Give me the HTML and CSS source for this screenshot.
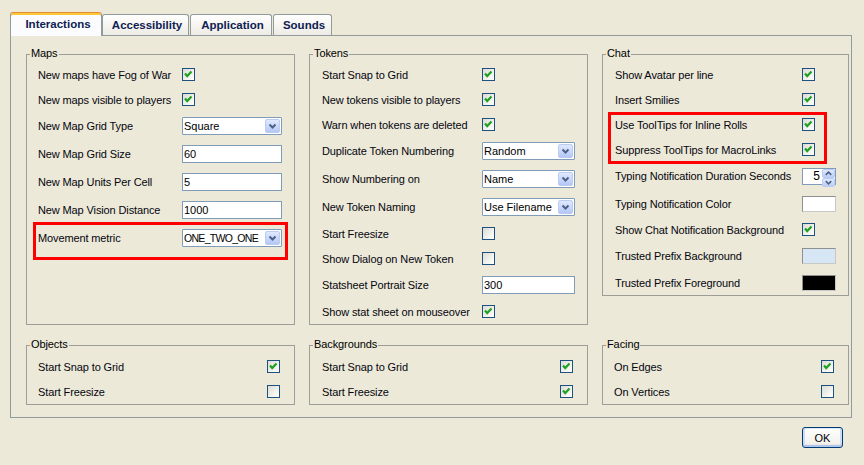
FILE: index.html
```html
<!DOCTYPE html>
<html>
<head>
<meta charset="utf-8">
<title>Preferences</title>
<link rel="stylesheet" href="styles.css">
</head>
<body>
<div class="dialog">
  <div class="tabs">
    <div class="tab tab-active t-int">Interactions</div>
    <div class="tab t-acc">Accessibility</div>
    <div class="tab t-app">Application</div>
    <div class="tab t-snd">Sounds</div>
  </div>
  <div class="panel">
    <div class="group g-maps">
      <span class="title">Maps</span>
      <div class="row"><span class="lbl">New maps have Fog of War</span><span class="ctl"><span class="check"><svg width="11" height="11" viewBox="0 0 11 11"><polyline points="2,4.5 4.2,7 8.5,2.5" fill="none" stroke="#21a121" stroke-width="2.2"/></svg></span></span></div>
      <div class="row"><span class="lbl">New maps visible to players</span><span class="ctl"><span class="check"><svg width="11" height="11" viewBox="0 0 11 11"><polyline points="2,4.5 4.2,7 8.5,2.5" fill="none" stroke="#21a121" stroke-width="2.2"/></svg></span></span></div>
      <div class="row row-f"><span class="lbl">New Map Grid Type</span><span class="ctl"><span class="combo"><span class="combo-val">Square</span><span class="combo-btn"><svg width="13" height="12" viewBox="0 0 13 12"><polyline points="3.5,4.5 6.5,7.5 9.5,4.5" fill="none" stroke="#4d6185" stroke-width="2"/></svg></span></span></span></div>
      <div class="row row-f"><span class="lbl">New Map Grid Size</span><span class="ctl"><span class="field">60</span></span></div>
      <div class="row row-f"><span class="lbl">New Map Units Per Cell</span><span class="ctl"><span class="field">5</span></span></div>
      <div class="row row-f"><span class="lbl">New Map Vision Distance</span><span class="ctl"><span class="field">1000</span></span></div>
      <div class="row row-f hl-maps"><span class="lbl">Movement metric</span><span class="ctl"><span class="combo"><span class="combo-val narrow">ONE_TWO_ONE</span><span class="combo-btn"><svg width="13" height="12" viewBox="0 0 13 12"><polyline points="3.5,4.5 6.5,7.5 9.5,4.5" fill="none" stroke="#4d6185" stroke-width="2"/></svg></span></span></span></div>
    </div>

    <div class="group g-tokens">
      <span class="title">Tokens</span>
      <div class="row"><span class="lbl">Start Snap to Grid</span><span class="ctl"><span class="check"><svg width="11" height="11" viewBox="0 0 11 11"><polyline points="2,4.5 4.2,7 8.5,2.5" fill="none" stroke="#21a121" stroke-width="2.2"/></svg></span></span></div>
      <div class="row"><span class="lbl">New tokens visible to players</span><span class="ctl"><span class="check"><svg width="11" height="11" viewBox="0 0 11 11"><polyline points="2,4.5 4.2,7 8.5,2.5" fill="none" stroke="#21a121" stroke-width="2.2"/></svg></span></span></div>
      <div class="row"><span class="lbl">Warn when tokens are deleted</span><span class="ctl"><span class="check"><svg width="11" height="11" viewBox="0 0 11 11"><polyline points="2,4.5 4.2,7 8.5,2.5" fill="none" stroke="#21a121" stroke-width="2.2"/></svg></span></span></div>
      <div class="row row-f"><span class="lbl">Duplicate Token Numbering</span><span class="ctl"><span class="combo"><span class="combo-val">Random</span><span class="combo-btn"><svg width="13" height="12" viewBox="0 0 13 12"><polyline points="3.5,4.5 6.5,7.5 9.5,4.5" fill="none" stroke="#4d6185" stroke-width="2"/></svg></span></span></span></div>
      <div class="row row-f"><span class="lbl">Show Numbering on</span><span class="ctl"><span class="combo"><span class="combo-val">Name</span><span class="combo-btn"><svg width="13" height="12" viewBox="0 0 13 12"><polyline points="3.5,4.5 6.5,7.5 9.5,4.5" fill="none" stroke="#4d6185" stroke-width="2"/></svg></span></span></span></div>
      <div class="row row-f"><span class="lbl">New Token Naming</span><span class="ctl"><span class="combo"><span class="combo-val">Use Filename</span><span class="combo-btn"><svg width="13" height="12" viewBox="0 0 13 12"><polyline points="3.5,4.5 6.5,7.5 9.5,4.5" fill="none" stroke="#4d6185" stroke-width="2"/></svg></span></span></span></div>
      <div class="row"><span class="lbl">Start Freesize</span><span class="ctl"><span class="check"></span></span></div>
      <div class="row"><span class="lbl">Show Dialog on New Token</span><span class="ctl"><span class="check"></span></span></div>
      <div class="row row-f"><span class="lbl">Statsheet Portrait Size</span><span class="ctl"><span class="field">300</span></span></div>
      <div class="row"><span class="lbl">Show stat sheet on mouseover</span><span class="ctl"><span class="check"><svg width="11" height="11" viewBox="0 0 11 11"><polyline points="2,4.5 4.2,7 8.5,2.5" fill="none" stroke="#21a121" stroke-width="2.2"/></svg></span></span></div>
    </div>

    <div class="group g-chat">
      <span class="title">Chat</span>
      <div class="row"><span class="lbl">Show Avatar per line</span><span class="ctl"><span class="check"><svg width="11" height="11" viewBox="0 0 11 11"><polyline points="2,4.5 4.2,7 8.5,2.5" fill="none" stroke="#21a121" stroke-width="2.2"/></svg></span></span></div>
      <div class="row"><span class="lbl">Insert Smilies</span><span class="ctl"><span class="check"><svg width="11" height="11" viewBox="0 0 11 11"><polyline points="2,4.5 4.2,7 8.5,2.5" fill="none" stroke="#21a121" stroke-width="2.2"/></svg></span></span></div>
      <div class="hl-chat">
        <div class="row"><span class="lbl">Use ToolTips for Inline Rolls</span><span class="ctl"><span class="check"><svg width="11" height="11" viewBox="0 0 11 11"><polyline points="2,4.5 4.2,7 8.5,2.5" fill="none" stroke="#21a121" stroke-width="2.2"/></svg></span></span></div>
        <div class="row"><span class="lbl">Suppress ToolTips for MacroLinks</span><span class="ctl"><span class="check"><svg width="11" height="11" viewBox="0 0 11 11"><polyline points="2,4.5 4.2,7 8.5,2.5" fill="none" stroke="#21a121" stroke-width="2.2"/></svg></span></span></div>
      </div>
      <div class="row row-f"><span class="lbl">Typing Notification Duration Seconds</span><span class="ctl"><span class="spinner"><span class="spin-field">5</span><span class="spin-btns"><span class="spin-btn"><svg width="12" height="7" viewBox="0 0 12 7"><polyline points="3,5 6,2 9,5" fill="none" stroke="#4d6185" stroke-width="1.6"/></svg></span><span class="spin-btn"><svg width="12" height="7" viewBox="0 0 12 7"><polyline points="3,2 6,5 9,2" fill="none" stroke="#4d6185" stroke-width="1.6"/></svg></span></span></span></span></div>
      <div class="row row-s"><span class="lbl">Typing Notification Color</span><span class="ctl"><span class="swatch sw-white"></span></span></div>
      <div class="row"><span class="lbl">Show Chat Notification Background</span><span class="ctl"><span class="check"><svg width="11" height="11" viewBox="0 0 11 11"><polyline points="2,4.5 4.2,7 8.5,2.5" fill="none" stroke="#21a121" stroke-width="2.2"/></svg></span></span></div>
      <div class="row row-s"><span class="lbl">Trusted Prefix Background</span><span class="ctl"><span class="swatch sw-blue"></span></span></div>
      <div class="row row-s"><span class="lbl">Trusted Prefix Foreground</span><span class="ctl"><span class="swatch sw-black"></span></span></div>
    </div>

    <div class="group g-bottom g-objects">
      <span class="title">Objects</span>
      <div class="row"><span class="lbl">Start Snap to Grid</span><span class="ctl"><span class="check"><svg width="11" height="11" viewBox="0 0 11 11"><polyline points="2,4.5 4.2,7 8.5,2.5" fill="none" stroke="#21a121" stroke-width="2.2"/></svg></span></span></div>
      <div class="row"><span class="lbl">Start Freesize</span><span class="ctl"><span class="check"></span></span></div>
    </div>

    <div class="group g-bottom">
      <span class="title">Backgrounds</span>
      <div class="row"><span class="lbl">Start Snap to Grid</span><span class="ctl"><span class="check"><svg width="11" height="11" viewBox="0 0 11 11"><polyline points="2,4.5 4.2,7 8.5,2.5" fill="none" stroke="#21a121" stroke-width="2.2"/></svg></span></span></div>
      <div class="row"><span class="lbl">Start Freesize</span><span class="ctl"><span class="check"><svg width="11" height="11" viewBox="0 0 11 11"><polyline points="2,4.5 4.2,7 8.5,2.5" fill="none" stroke="#21a121" stroke-width="2.2"/></svg></span></span></div>
    </div>

    <div class="group g-bottom g-facing">
      <span class="title">Facing</span>
      <div class="row"><span class="lbl">On Edges</span><span class="ctl"><span class="check"><svg width="11" height="11" viewBox="0 0 11 11"><polyline points="2,4.5 4.2,7 8.5,2.5" fill="none" stroke="#21a121" stroke-width="2.2"/></svg></span></span></div>
      <div class="row"><span class="lbl">On Vertices</span><span class="ctl"><span class="check"></span></span></div>
    </div>
  </div>
  <div class="footer">
    <div class="ok">OK</div>
  </div>
</div>
</body>
</html>
```

FILE: styles.css
```css
html, body {
  margin: 0;
  background: #ece9d8;
}
body {
  font-family: "Liberation Sans", Arial, sans-serif;
  font-size: 11px;
  color: #000;
}
.dialog {
  padding: 12px 12px 0 10px;
}

/* tabs */
.tabs {
  display: flex;
  align-items: flex-end;
  height: 23px;
  position: relative;
  z-index: 1;
}
.tab {
  box-sizing: border-box;
  height: 21px;
  border: 1px solid #919b9c;
  border-bottom: none;
  border-radius: 3px 3px 0 0;
  background: linear-gradient(#ffffff, #f5f4ef 55%, #ecebe5);
  font-weight: bold;
  font-size: 11.5px;
  color: #0e2154;
  display: flex;
  align-items: center;
  justify-content: center;
  padding-left: 3px;
}
.tab-active {
  height: 24px;
  margin-bottom: -1px;
  background: #fcfcfe;
  border-top: 1px solid #e68b2c;
  box-shadow: inset 0 2px 0 #ffc73c;
  padding-bottom: 2px;
  padding-left: 4px;
}
.t-int { width: 92px; }
.t-acc { width: 87px; }
.t-app { width: 82px; margin-left: 1px; }
.t-snd { width: 59px; margin-left: 1px; }

/* main panel */
.panel {
  box-sizing: border-box;
  border: 1px solid #919b9c;
  display: grid;
  grid-template-columns: 269px 279px 247px;
  column-gap: 14px;
  row-gap: 20px;
  padding: 18px 3px 12px 15px;
}

.group {
  position: relative;
  box-sizing: border-box;
  border: 1px solid #9d9d9a;
  display: flex;
  flex-direction: column;
  gap: 10px;
  padding: 12px 12px 5px 12px;
}
.g-maps { padding-left: 11px; }
.g-chat { align-self: start; padding-bottom: 4px; }
.g-bottom { padding: 13px 14px 5px 12px; }
.g-objects { padding-left: 11px; }
.g-facing { padding-left: 11px; }

.title {
  position: absolute;
  top: -8px;
  left: 3px;
  padding: 0 1px;
  line-height: 13px;
  background: #ece9d8;
  letter-spacing: -0.1px;
}

.row {
  display: flex;
  align-items: center;
  height: 15px;
  white-space: nowrap;
}
.row-f { height: 18px; }
.row-s { height: 17px; }
.lbl {
  flex: 1;
  letter-spacing: -0.12px;
  color: #05050f;
}
.ctl {
  display: flex;
  align-items: center;
}
.g-maps .ctl { width: 100px; }
.g-tokens .ctl { width: 93px; }
.g-chat .ctl { width: 34px; }

/* checkbox */
.check {
  display: block;
  box-sizing: border-box;
  width: 13px;
  height: 13px;
  border: 1px solid #1c5180;
  background: linear-gradient(135deg, #dcdcd4, #f6f6f3 70%, #ffffff);
}
.check svg { display: block; }

/* combo */
.combo {
  box-sizing: border-box;
  width: 100%;
  height: 18px;
  border: 1px solid #7f9db9;
  border-radius: 1px;
  background: #fff;
  display: flex;
  align-items: center;
  padding-left: 1px;
}
.combo-val {
  flex: 1;
  overflow: hidden;
  white-space: nowrap;
}
.combo-val.narrow { letter-spacing: -0.7px; font-size: 10.5px; }
.combo-btn {
  box-sizing: border-box;
  width: 15px;
  height: 14px;
  margin-right: 1px;
  border: 1px solid #bccbf2;
  border-radius: 2px;
  background: linear-gradient(#e0e9fe, #c5d5fc 60%, #b4c6f3);
  display: flex;
  align-items: center;
  justify-content: center;
}
.combo-btn svg { display: block; }

/* text field */
.field {
  box-sizing: border-box;
  width: 100%;
  height: 18px;
  border: 1px solid #7f9db9;
  background: #fff;
  padding-left: 1px;
  display: flex;
  align-items: center;
}

/* spinner */
.spinner {
  display: flex;
  width: 34px;
  height: 17px;
}
.spin-field {
  box-sizing: border-box;
  width: 20px;
  height: 17px;
  border: 1px solid #7f9db9;
  border-right: none;
  background: #fff;
  text-align: right;
  padding-right: 2px;
  line-height: 15px;
  font-size: 12px;
}
.spin-btns {
  width: 14px;
  display: flex;
  flex-direction: column;
  border: 1px solid #7f9db9;
  border-left: none;
  box-sizing: border-box;
  background: #fff;
}
.spin-btn {
  flex: 1;
  box-sizing: border-box;
  border: 1px solid #bccbf2;
  border-radius: 2px;
  background: linear-gradient(#e0e9fe, #bccdf6);
  display: flex;
  align-items: center;
  justify-content: center;
}
.spin-btn svg { display: block; }

/* color swatches */
.swatch {
  display: block;
  box-sizing: border-box;
  width: 34px;
  height: 16px;
  border: 1px solid;
  border-color: #8f8f8f #c8c8c4 #c8c8c4 #8f8f8f;
}
.sw-white { background: #ffffff; }
.sw-blue { background: #d6e6f4; }
.sw-black { background: #000000; }

/* red annotation boxes */
.hl-maps { position: relative; }
.hl-maps::after {
  content: "";
  position: absolute;
  top: -7px;
  bottom: -13px;
  left: -5px;
  right: -6px;
  border: 3px solid #ff0000;
  pointer-events: none;
}
.hl-chat {
  position: relative;
  display: flex;
  flex-direction: column;
  gap: 10px;
}
.hl-chat::after {
  content: "";
  position: absolute;
  top: -5px;
  bottom: -7px;
  left: -7px;
  right: 9px;
  border: 3px solid #ff0000;
  pointer-events: none;
}

/* footer */
.footer {
  display: flex;
  justify-content: flex-end;
  padding: 9px 9px 0 0;
}
.ok {
  box-sizing: border-box;
  width: 41px;
  height: 21px;
  border: 1px solid #003c74;
  border-radius: 3px;
  background: linear-gradient(#ffffff, #f3f2ee 80%, #dcd8cc);
  box-shadow: inset 0 -2px 0 #b0c4f0, inset 2px 0 0 #cfdcf8, inset -2px 0 0 #cfdcf8, inset 0 1px 0 #dfe8fb;
  display: flex;
  align-items: center;
  justify-content: center;
  font-size: 11px;
}
```
